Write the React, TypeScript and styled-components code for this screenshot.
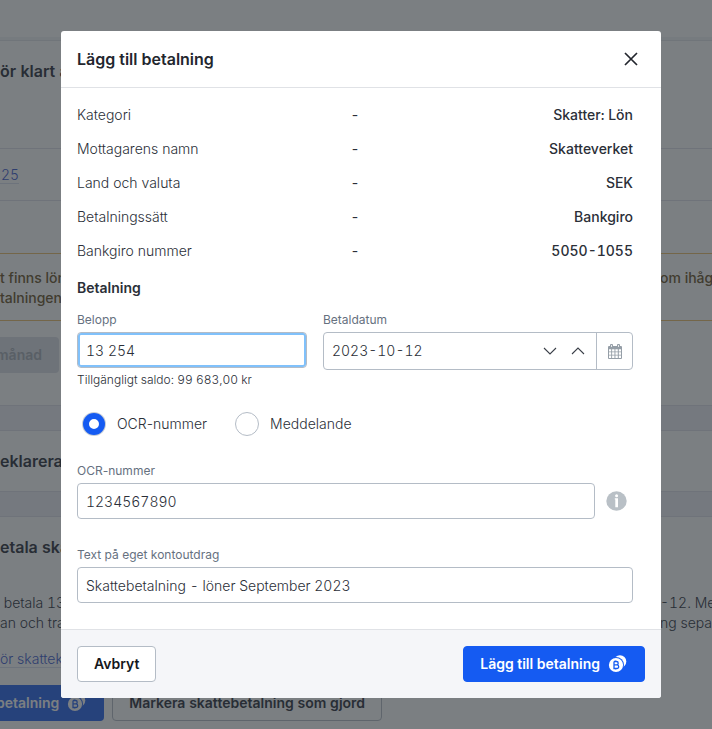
import React from "react";
import styled, { createGlobalStyle, css } from "styled-components";

const GlobalStyle = createGlobalStyle`
  *, *::before, *::after { box-sizing: border-box; }
  body {
    margin: 0;
    font-family: Inter, "Liberation Sans", sans-serif;
    font-size: 14px;
    line-height: 20px;
    color: #2b2f38;
    background: #ffffff;
  }
  button, input { font: inherit; color: inherit; }
  h1, h2, h3, p, dl, dd, dt, fieldset { margin: 0; padding: 0; border: 0; }
`;

const Shell = styled.div`
  position: relative;
  min-height: 100vh;
  overflow: hidden;
`;

/* Page behind the dialog */
const Page = styled.main`
  display: flex;
  flex-direction: column;
  white-space: nowrap;
  font-weight: 350;
  font-variant-numeric: tabular-nums;
  color: #30343f;
`;

const TopBar = styled.div`
  height: 41px;
  border-bottom: 1px solid #e3e5ec;
  box-shadow: inset 0 -3px 0 #f2f4f8;
`;

const PageTitle = styled.h2`
  font-size: 16px;
  line-height: 24px;
  font-weight: 600;
`;

const TitleRow = styled.div<{ $height: number; $top: number }>`
  height: ${(p) => p.$height}px;
  padding-top: ${(p) => p.$top}px;
`;

const LinkRow = styled.div`
  margin-left: -8px;
  padding: 16px 0 15px;
  border: 1px solid #e0e2ea;
  border-width: 1px 0;
`;

const PageLink = styled.a`
  color: #3f5cd0;
  text-decoration: none;
  border-bottom: 1px solid #dce0f0;
`;

const Alert = styled.div`
  margin-top: 52px;
  padding: 14px 0 12px;
  border: 1px solid #eec070;
  border-width: 1px 0;
  color: #6e5830;
  font-weight: 550;
`;

const SplitLine = styled.div`
  display: flex;
  justify-content: space-between;
`;

const Tail = styled.span`
  width: 52px;
`;

const Actions = styled.div<{ $top: number }>`
  display: flex;
  gap: 8px;
  margin: ${(p) => p.$top}px 0 0 -5px;
`;

const PageButton = styled.button<{ $kind: "muted" | "primary" | "plain" }>`
  display: flex;
  align-items: center;
  gap: 8px;
  height: 36px;
  padding: 0 16px;
  border: 1px solid transparent;
  border-radius: 4px;
  font-weight: 600;
  ${(p) =>
    p.$kind === "muted" &&
    css`
      padding-left: 0;
      background: #dee1e8;
      color: #abb0b8;
    `}
  ${(p) =>
    p.$kind === "primary" &&
    css`
      padding-left: 0;
      background: #2c66ee;
      color: #ffffff;
    `}
  ${(p) =>
    p.$kind === "plain" &&
    css`
      background: transparent;
      border-color: #b9bfc8;
    `}
`;

const Band = styled.div`
  height: 26px;
  border: 1px solid #e0e2ea;
  border-width: 1px 0;
  background: #eff0f8;
`;

const Copy = styled.div`
  padding-bottom: 16px;
`;

/* Dialog */
const Backdrop = styled.div`
  position: absolute;
  inset: 0;
  display: flex;
  justify-content: center;
  align-items: flex-start;
  padding: 31px 0 31px 10px;
  background: rgba(35, 42, 46, 0.6);
`;

const Dialog = styled.form`
  width: 100%;
  max-width: 600px;
  border-radius: 3px;
  background: #ffffff;
  overflow: hidden;
`;

const DialogHeader = styled.header`
  display: flex;
  align-items: center;
  justify-content: space-between;
  height: 57px;
  padding: 0 16px;
  border-bottom: 1px solid #e0e2e6;
`;

const DialogTitle = styled.h1`
  font-size: 16px;
  line-height: 24px;
  font-weight: 600;
  color: #23262e;
`;

const CloseButton = styled.button`
  display: grid;
  place-items: center;
  width: 28px;
  height: 28px;
  padding: 0;
  border: 0;
  background: none;
`;

const DialogBody = styled.div`
  padding: 10px 28px 26px 16px;
`;

const Details = styled.dl`
  display: flex;
  flex-direction: column;
`;

const DetailRow = styled.div`
  display: grid;
  grid-template-columns: 1fr auto 1fr;
  align-items: center;
  height: 34px;
`;

const Term = styled.dt`
  font-weight: 350;
`;

const Value = styled.dd`
  text-align: right;
  font-weight: 550;
  font-variant-numeric: tabular-nums;
`;

const SectionTitle = styled.h3`
  margin-top: 10px;
  font-size: 14px;
  line-height: 20px;
  font-weight: 600;
`;

const FieldGrid = styled.div`
  display: grid;
  grid-template-columns: minmax(0, 23fr) minmax(0, 31fr);
  align-items: start;
  gap: 16px;
  margin-top: 14px;
`;

const Field = styled.div`
  display: flex;
  flex-direction: column;
`;

const Label = styled.label`
  margin-bottom: 4px;
  font-size: 12px;
  line-height: 16px;
  color: #66717f;
`;

const inputText = css`
  padding: 0 8px;
  outline: none;
  font-weight: 350;
  font-variant-numeric: tabular-nums;
`;

const TextInput = styled.input<{ $active?: boolean }>`
  ${inputText}
  width: 100%;
  min-width: 0;
  height: 36px;
  border: 1px solid #b4bcc6;
  border-radius: 4px;
  background: #ffffff;
  ${(p) =>
    p.$active &&
    css`
      box-shadow: inset 0 0 0 2px #80c1fb;
    `}
`;

const Hint = styled.p`
  margin-top: 4px;
  font-size: 12px;
  line-height: 16px;
  font-weight: 350;
  font-variant-numeric: tabular-nums;
`;

const DateBox = styled.div`
  display: flex;
  height: 38px;
  border: 1px solid #b4bcc6;
  border-radius: 4px;
`;

const DateInput = styled.input`
  ${inputText}
  flex: 1;
  min-width: 0;
  border: 0;
  background: none;
`;

const StepButton = styled.button`
  display: grid;
  place-items: center;
  width: 28px;
  padding: 0;
  border: 0;
  background: none;
`;

const CalendarButton = styled(StepButton)`
  width: 36px;
  margin-left: 4px;
  border-left: 1px solid #b4bcc6;
  color: #959ea7;
`;

const RadioGroup = styled.fieldset`
  display: flex;
  gap: 28px;
  margin-top: 24px;
  padding-left: 5px;
`;

const RadioLabel = styled.label`
  display: flex;
  align-items: center;
  gap: 11px;
  font-weight: 350;
`;

const Radio = styled.input`
  appearance: none;
  width: 24px;
  height: 24px;
  margin: 0;
  border: 1px solid #b4bcc6;
  border-radius: 50%;
  background: #ffffff;
  &:checked {
    width: 22px;
    height: 22px;
    margin: 1px;
    border: 6px solid #155bf2;
    box-shadow: 0 0 0 1px #c6cdd6;
  }
`;

const StackedField = styled(Field)<{ $top: number }>`
  margin-top: ${(p) => p.$top}px;
`;

const InputWithHelp = styled.div`
  display: flex;
  align-items: center;
  gap: 11px;
`;

const HelpButton = styled.button`
  display: grid;
  flex: none;
  place-items: center;
  width: 27px;
  height: 27px;
  padding: 0 6px 0 0;
  border: 0;
  background: none;
`;

const DialogFooter = styled.footer`
  display: flex;
  justify-content: space-between;
  padding: 16px;
  border-top: 1px solid #e0e2e6;
  background: #f5f6f9;
`;

const FooterButton = styled.button<{ $primary?: boolean }>`
  display: flex;
  align-items: center;
  gap: 8px;
  height: 36px;
  padding: 0 16px;
  border: 1px solid ${(p) => (p.$primary ? "#155bf2" : "#b4bcc6")};
  border-radius: 4px;
  background: ${(p) => (p.$primary ? "#155bf2" : "#ffffff")};
  color: ${(p) => (p.$primary ? "#ffffff" : "#15171c")};
  font-weight: 600;
`;

const CoinIcon = ({ ink = "#155bf2" }: { ink?: string }) => (
  <svg width="20" height="20" viewBox="0 0 20 20" fill="none" aria-hidden="true">
    <circle cx="12" cy="7.5" r="6.3" fill="#fff" />
    <circle cx="8" cy="11" r="8" fill={ink} />
    <circle cx="8" cy="11" r="7.1" fill="#fff" />
    <path
      d="M6 7.5h2.5a1.6 1.6 0 0 1 0 3.4H6m0 0h2.9a1.7 1.7 0 0 1 0 3.6H6V7.5M7.6 6.6v.9M7.6 14.5v.9"
      stroke={ink}
      strokeWidth="1.3"
    />
  </svg>
);

const CloseIcon = () => (
  <svg width="14" height="14" viewBox="0 0 14 14" aria-hidden="true">
    <path d="M1 1l12 12M13 1L1 13" stroke="#23262e" strokeWidth="1.7" />
  </svg>
);

const Chevron = ({ up }: { up?: boolean }) => (
  <svg width="14" height="8" viewBox="0 0 14 8" fill="none" aria-hidden="true">
    <path d={up ? "M1 7l6-6 6 6" : "M1 1l6 6 6-6"} stroke="#3a3f48" strokeWidth="1.1" />
  </svg>
);

const CalendarIcon = () => (
  <svg width="14" height="15" viewBox="0 0 14 15" aria-hidden="true">
    <path d="M1 2h12a1 1 0 0 1 1 1v11a1 1 0 0 1-1 1H1a1 1 0 0 1-1-1V3a1 1 0 0 1 1-1Z" fill="currentColor" />
    <rect x="2" y="0" width="3" height="4" rx="1" fill="currentColor" />
    <rect x="9" y="0" width="3" height="4" rx="1" fill="currentColor" />
    <path d="M3.5 1v2M10.5 1v2" stroke="#fff" strokeWidth="0.8" />
    <path
      d="M1 5.2h2.2v2.2H1zM4.1 5.2h2.4v2.2H4.1zM7.4 5.2h2.4v2.2H7.4zM10.8 5.2H13v2.2h-2.2zM1 8.3h2.2v2.4H1zM4.1 8.3h2.4v2.4H4.1zM7.4 8.3h2.4v2.4H7.4zM10.8 8.3H13v2.4h-2.2zM1 11.6h2.2V14H1zM4.1 11.6h2.4V14H4.1zM7.4 11.6h2.4V14H7.4zM10.8 11.6H13V14h-2.2z"
      fill="#fff"
    />
  </svg>
);

const InfoIcon = () => (
  <svg width="21" height="20" viewBox="0 0 21 20" aria-hidden="true">
    <ellipse cx="10.5" cy="10" rx="10.2" ry="9.7" fill="#b9c0c6" />
    <circle cx="10.6" cy="4.7" r="1.5" fill="#fff" />
    <path d="M8.8 7.3H12v9H9.3V8.6h-.5z" fill="#fff" />
  </svg>
);

const details = [
  ["Kategori", "Skatter: Lön"],
  ["Mottagarens namn", "Skatteverket"],
  ["Land och valuta", "SEK"],
  ["Betalningssätt", "Bankgiro"],
  ["Bankgiro nummer", "5050-1055"],
];

export default function App() {
  return (
    <Shell>
      <GlobalStyle />
      <Page>
        <TopBar />
        <TitleRow $height={107} $top={18}>
          <PageTitle>ör klart a</PageTitle>
        </TitleRow>
        <LinkRow>
          <PageLink href="#period">-25</PageLink>
        </LinkRow>
        <Alert>
          <SplitLine>
            <span>t finns lön</span>
            <Tail>om ihåg</Tail>
          </SplitLine>
          <SplitLine>
            <span>talningen</span>
          </SplitLine>
        </Alert>
        <Actions $top={16}>
          <PageButton type="button" $kind="muted">månad</PageButton>
        </Actions>
        <TitleRow $height={32} $top={0} />
        <Band />
        <TitleRow $height={60} $top={18}>
          <PageTitle>eklarera</PageTitle>
        </TitleRow>
        <Band />
        <TitleRow $height={76} $top={18}>
          <PageTitle>etala ska</PageTitle>
        </TitleRow>
        <Copy>
          <SplitLine>
            <span>&nbsp;betala 13</span>
            <Tail>-12. Me</Tail>
          </SplitLine>
          <SplitLine>
            <span>an och tra</span>
            <Tail>ng sepa</Tail>
          </SplitLine>
        </Copy>
        <div>
          <PageLink href="#skattekonto">ör skattek</PageLink>
        </div>
        <Actions $top={16}>
          <PageButton type="button" $kind="primary">
            betalning <CoinIcon ink="#2c66ee" />
          </PageButton>
          <PageButton type="button" $kind="plain">Markera skattebetalning som gjord</PageButton>
        </Actions>
      </Page>

      <Backdrop>
        <Dialog role="dialog" aria-modal="true" aria-labelledby="dialog-title" onSubmit={(e) => e.preventDefault()}>
          <DialogHeader>
            <DialogTitle id="dialog-title">Lägg till betalning</DialogTitle>
            <CloseButton type="button" aria-label="Stäng">
              <CloseIcon />
            </CloseButton>
          </DialogHeader>
          <DialogBody>
            <Details>
              {details.map(([term, value]) => (
                <DetailRow key={term}>
                  <Term>{term}</Term>
                  <span>-</span>
                  <Value>{value}</Value>
                </DetailRow>
              ))}
            </Details>
            <SectionTitle>Betalning</SectionTitle>
            <FieldGrid>
              <Field>
                <Label htmlFor="amount">Belopp</Label>
                <TextInput id="amount" defaultValue="13 254" $active />
                <Hint>Tillgängligt saldo: 99 683,00 kr</Hint>
              </Field>
              <Field>
                <Label htmlFor="date">Betaldatum</Label>
                <DateBox>
                  <DateInput id="date" defaultValue="2023-10-12" />
                  <StepButton type="button" aria-label="Föregående dag">
                    <Chevron />
                  </StepButton>
                  <StepButton type="button" aria-label="Nästa dag">
                    <Chevron up />
                  </StepButton>
                  <CalendarButton type="button" aria-label="Öppna kalender">
                    <CalendarIcon />
                  </CalendarButton>
                </DateBox>
              </Field>
            </FieldGrid>
            <RadioGroup>
              <RadioLabel>
                <Radio type="radio" name="reference" defaultChecked />
                OCR-nummer
              </RadioLabel>
              <RadioLabel>
                <Radio type="radio" name="reference" />
                Meddelande
              </RadioLabel>
            </RadioGroup>
            <StackedField $top={27}>
              <Label htmlFor="ocr">OCR-nummer</Label>
              <InputWithHelp>
                <TextInput id="ocr" defaultValue="1234567890" />
                <HelpButton type="button" aria-label="Information om OCR-nummer">
                  <InfoIcon />
                </HelpButton>
              </InputWithHelp>
            </StackedField>
            <StackedField $top={28}>
              <Label htmlFor="statement">Text på eget kontoutdrag</Label>
              <TextInput id="statement" defaultValue="Skattebetalning - löner September 2023" />
            </StackedField>
          </DialogBody>
          <DialogFooter>
            <FooterButton type="button">Avbryt</FooterButton>
            <FooterButton type="submit" $primary>
              Lägg till betalning <CoinIcon />
            </FooterButton>
          </DialogFooter>
        </Dialog>
      </Backdrop>
    </Shell>
  );
}
